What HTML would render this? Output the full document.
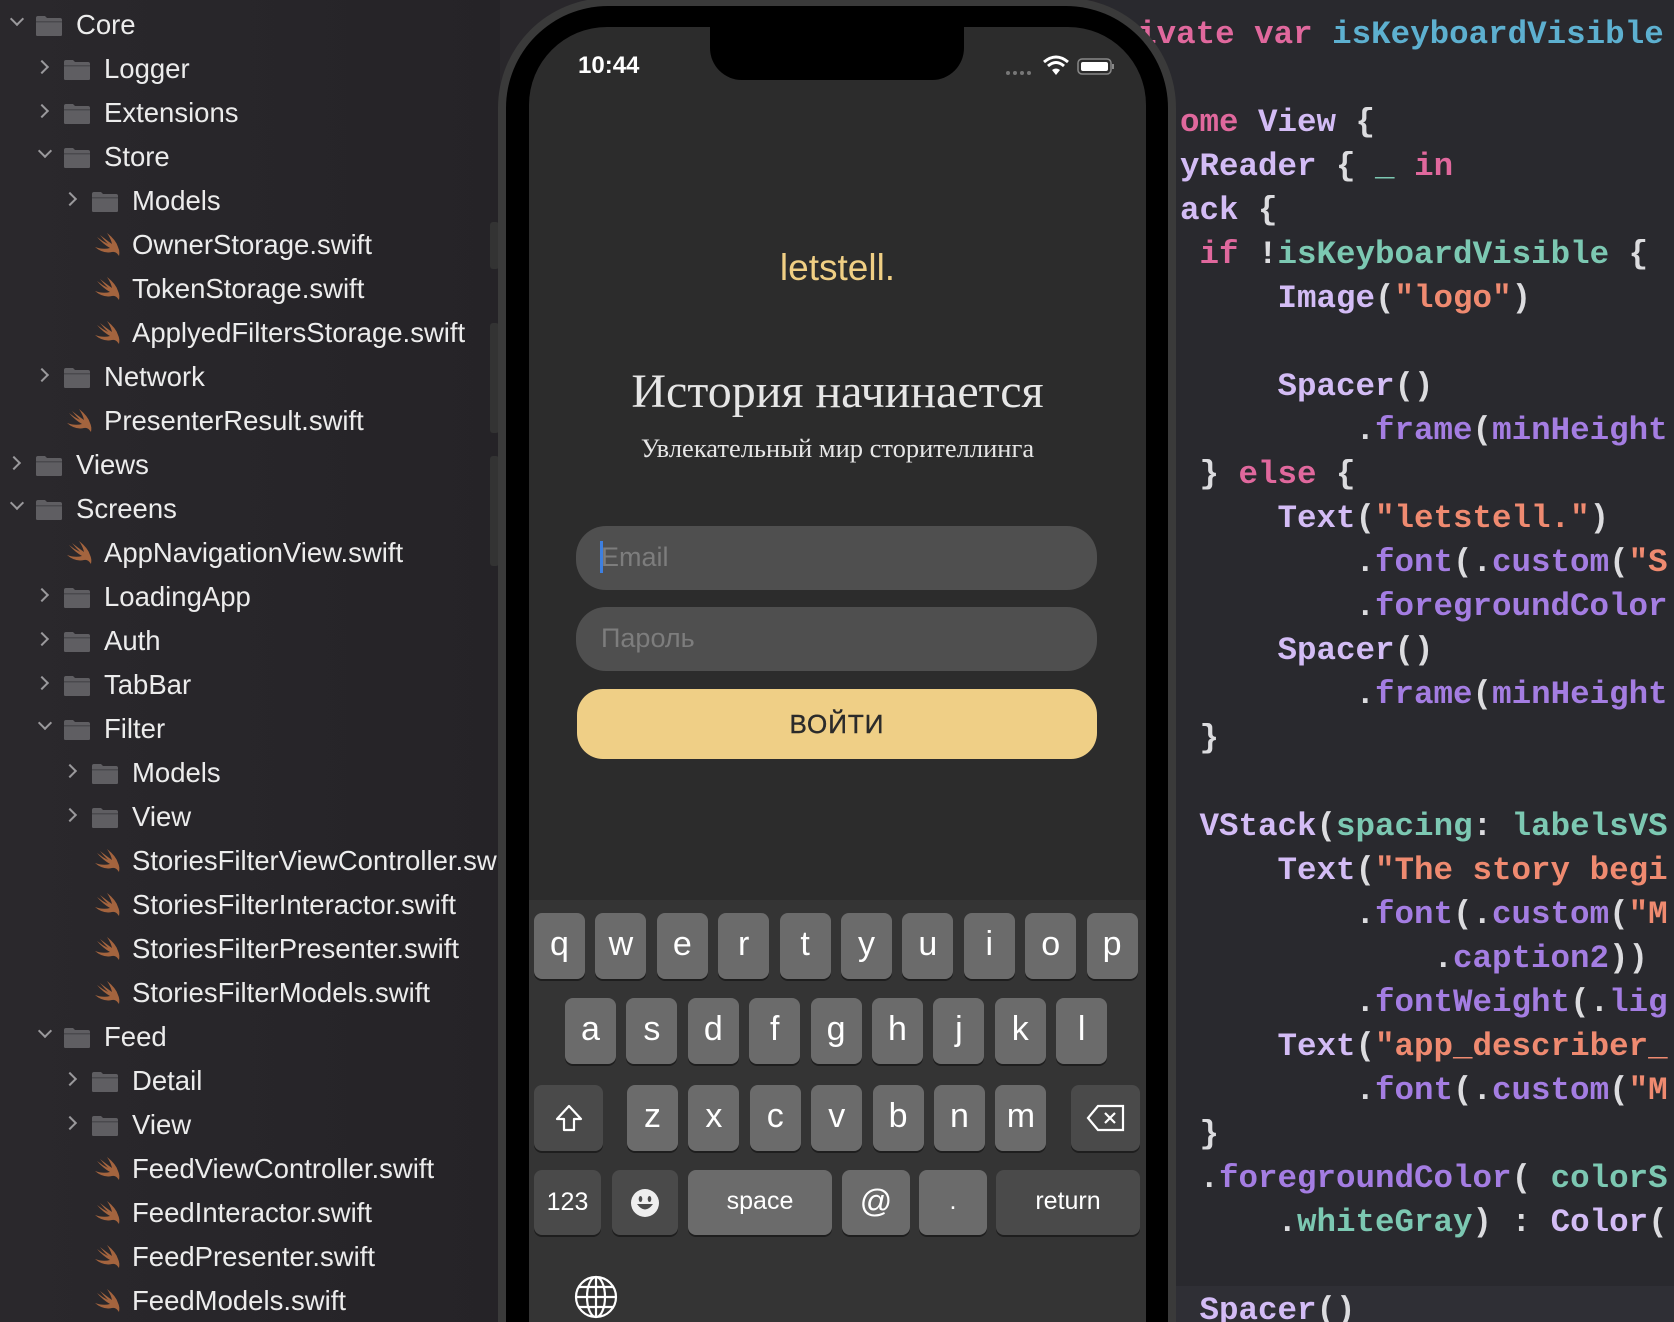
<!DOCTYPE html>
<html><head><meta charset="utf-8">
<style>
*{margin:0;padding:0;box-sizing:border-box}
html,body{width:1674px;height:1322px;overflow:hidden}
body{background:#29272b;font-family:"Liberation Sans",sans-serif}
#wrap{position:relative;width:1674px;height:1322px;overflow:hidden}
.side{position:absolute;left:0;top:0;width:500px;height:1322px;background:linear-gradient(90deg,#2a282c,#252327);overflow:hidden}
.row{position:absolute;height:44px;left:0;right:0;color:#ececec;font-size:27.5px;line-height:44px;white-space:nowrap}
.row span.t{position:absolute}
.chev{position:absolute;top:15px;width:10px;height:10px;border-right:2.5px solid #9a999c;border-bottom:2.5px solid #9a999c}
.chev.c{transform:rotate(-45deg)}
.chev.o{transform:rotate(45deg);top:11px}
.fold{position:absolute;top:12px;width:28px;height:22px}
.code{position:absolute;left:1100px;top:0;right:0;height:1322px;background:#29292e;overflow:hidden}
.cl{position:absolute;font-family:"Liberation Mono",monospace;font-weight:bold;font-size:32.5px;line-height:44px;white-space:pre;color:#dcdcdf}
.k{color:#e0689d}.ty{color:#d3bcf5}.m{color:#a47de2}.s{color:#ef8a70}.g{color:#7cc8b2}.b{color:#5db0d0}
.key{position:absolute;background:#6b6b6b;border-radius:8px;color:#fff;font-size:34px;text-align:center;box-shadow:0 2px 0 #1e1e1e}
.key.d{background:#4a4a4a}
</style></head><body><div id="wrap">
<div class="side" id="side"></div>
<div class="code">
<div style="position:absolute;left:0;right:0;top:1286px;height:36px;background:#2f2f35"></div>
</div>
<div id="codelines"></div>

<div style="position:absolute;left:490px;top:222px;width:9px;height:47px;background:#333;border-radius:3px"></div>
<div style="position:absolute;left:490px;top:323px;width:9px;height:110px;background:#333;border-radius:3px"></div>
<div style="position:absolute;left:490px;top:456px;width:9px;height:110px;background:#333;border-radius:3px"></div>
<div style="position:absolute;left:498px;top:-2px;width:678px;height:1324px;border-radius:110px 110px 0 0;background:#000;border:8px solid #3a3a3a;border-bottom:none"></div>
<div style="position:absolute;left:529px;top:27px;width:617px;height:1295px;border-radius:78px 78px 0 0;background:#2c2c2c;overflow:hidden">
  <div style="position:absolute;left:0;right:0;top:873px;bottom:0;background:#343434"></div>
</div>
<div style="position:absolute;left:710px;top:20px;width:254px;height:60px;background:#000;border-radius:0 0 32px 32px"></div>
<div style="position:absolute;left:578px;top:52px;color:#fff;font-size:24px;font-weight:bold">10:44</div>
<svg style="position:absolute;left:1000px;top:50px" width="120" height="30" viewBox="1000 50 120 30">
<g fill="#777"><circle cx="1008" cy="73" r="2"/><circle cx="1015" cy="73" r="2"/><circle cx="1022" cy="73" r="2"/><circle cx="1029" cy="73" r="2"/></g>
<path d="M1044 62 Q1056 52 1068 62" stroke="#fff" stroke-width="3" fill="none"/>
<path d="M1048 66 Q1056 59 1064 66" stroke="#fff" stroke-width="3" fill="none"/>
<path d="M1052 70 L1056 75 L1060 70 Q1056 67 1052 70Z" fill="#fff"/>
<rect x="1078" y="59" width="33" height="15" rx="4" fill="none" stroke="#888" stroke-width="1.5"/>
<rect x="1081" y="62" width="27" height="9" rx="2" fill="#fff"/>
<rect x="1112" y="64" width="2" height="5" fill="#888"/>
</svg>
<div style="position:absolute;left:530px;width:615px;top:247px;text-align:center;color:#f0cf84;font-size:37px">letstell.</div>
<div style="position:absolute;left:530px;width:615px;top:364px;text-align:center;color:#e6e6e6;font-family:'Liberation Serif',serif;font-size:48px">История начинается</div>
<div style="position:absolute;left:530px;width:615px;top:433px;text-align:center;color:#e6e6e6;font-family:'Liberation Serif',serif;font-size:26.5px">Увлекательный мир сторителлинга</div>
<div style="position:absolute;left:576px;top:526px;width:521px;height:64px;border-radius:30px;background:#4f4f4f"></div>
<div style="position:absolute;left:600px;top:541px;width:3px;height:32px;background:#3d7fe0"></div>
<div style="position:absolute;left:601px;top:542px;color:#7d7d7d;font-size:27px">Email</div>
<div style="position:absolute;left:576px;top:607px;width:521px;height:64px;border-radius:30px;background:#4f4f4f"></div>
<div style="position:absolute;left:601px;top:623px;color:#7d7d7d;font-size:27px">Пароль</div>
<div style="position:absolute;left:577px;top:689px;width:520px;height:70px;border-radius:26px;background:#efcf86;text-align:center;line-height:70px;color:#2b2b2b;font-size:26px;letter-spacing:1px;-webkit-text-stroke:0.4px #2b2b2b">ВОЙТИ</div>
<div id="kb"></div>
<svg style="position:absolute;left:574px;top:1275px" width="44" height="44" viewBox="0 0 44 44" fill="none" stroke="#fff" stroke-width="2.2">
<circle cx="22" cy="22" r="20"/><ellipse cx="22" cy="22" rx="9" ry="20"/><line x1="22" y1="2" x2="22" y2="42"/><line x1="2" y1="22" x2="42" y2="22"/><path d="M5 12 H39 M5 32 H39"/></svg>
</div>
<script>
var rows=[[0,'o','f','Core'],[1,'c','f','Logger'],[1,'c','f','Extensions'],[1,'o','f','Store'],[2,'c','f','Models'],[2,'','s','OwnerStorage.swift'],[2,'','s','TokenStorage.swift'],[2,'','s','ApplyedFiltersStorage.swift'],[1,'c','f','Network'],[1,'','s','PresenterResult.swift'],[0,'c','f','Views'],[0,'o','f','Screens'],[1,'','s','AppNavigationView.swift'],[1,'c','f','LoadingApp'],[1,'c','f','Auth'],[1,'c','f','TabBar'],[1,'o','f','Filter'],[2,'c','f','Models'],[2,'c','f','View'],[2,'','s','StoriesFilterViewController.swift'],[2,'','s','StoriesFilterInteractor.swift'],[2,'','s','StoriesFilterPresenter.swift'],[2,'','s','StoriesFilterModels.swift'],[1,'o','f','Feed'],[2,'c','f','Detail'],[2,'c','f','View'],[2,'','s','FeedViewController.swift'],[2,'','s','FeedInteractor.swift'],[2,'','s','FeedPresenter.swift'],[2,'','s','FeedModels.swift']];
var h='';
rows.forEach(function(r,i){var l=r[0],y=3+44*i,off=28*l;
h+='<div class="row" style="top:'+y+'px">';
if(r[1])h+='<div class="chev '+r[1]+'" style="left:'+(r[1]=='c'?(9+off):(12+off))+'px"></div>';
if(r[2]=='f')h+='<svg class="fold" style="left:'+(35+off)+'px" viewBox="0 0 28 22"><path d="M1 3 Q1 1 3 1 H10 L12 3 H25 Q27 3 27 5 V20 Q27 21 25 21 H3 Q1 21 1 20Z" fill="#5f5e62"/><rect x="1" y="6" width="26" height="1.5" fill="#4a494d"/></svg>';
else h+='<svg class="fold" style="left:'+(76+off-39)+'px;width:28px;height:26px;top:9px" viewBox="0 0 28 26"><path d="M2 15 Q10 22 19 20 Q23 19 26 24 Q27 19 25 15 Q23 8 14 1 Q18 7 19 12 Q12 7 7 3 Q11 8 15 12 Q9 9 4 5 Q10 12 17 16 Q10 18 2 15Z" fill="#a4643e"/></svg>';
h+='<span class="t" style="left:'+(76+off)+'px">'+r[3]+'</span></div>';});
document.getElementById('side').innerHTML=h;
var cw=19.5,c0=1180;
var L=[[0,-2.2,'<span class="k">ivate var</span> <span class="b">isKeyboardVisible</span>'],
[2,0,'<span class="k">ome</span> <span class="ty">View</span> {'],
[3,0,'<span class="ty">yReader</span> { <span class="g">_</span> <span class="k">in</span>'],
[4,0,'<span class="ty">ack</span> {'],
[5,1,'<span class="k">if</span> !<span class="g">isKeyboardVisible</span> {'],
[6,5,'<span class="ty">Image</span>(<span class="s">"logo"</span>)'],
[8,5,'<span class="ty">Spacer</span>()'],
[9,9,'.<span class="m">frame</span>(<span class="m">minHeight</span>'],
[10,1,'} <span class="k">else</span> {'],
[11,5,'<span class="ty">Text</span>(<span class="s">"letstell."</span>)'],
[12,9,'.<span class="m">font</span>(.<span class="m">custom</span>(<span class="s">"S</span>'],
[13,9,'.<span class="m">foregroundColor</span>'],
[14,5,'<span class="ty">Spacer</span>()'],
[15,9,'.<span class="m">frame</span>(<span class="m">minHeight</span>'],
[16,1,'}'],
[18,1,'<span class="ty">VStack</span>(<span class="g">spacing</span>: <span class="g">labelsVS</span>'],
[19,5,'<span class="ty">Text</span>(<span class="s">"The story begi</span>'],
[20,9,'.<span class="m">font</span>(.<span class="m">custom</span>(<span class="s">"M</span>'],
[21,13,'.<span class="m">caption2</span>))'],
[22,9,'.<span class="m">fontWeight</span>(.<span class="m">lig</span>'],
[23,5,'<span class="ty">Text</span>(<span class="s">"app_describer_</span>'],
[24,9,'.<span class="m">font</span>(.<span class="m">custom</span>(<span class="s">"M</span>'],
[25,1,'}'],
[26,1,'.<span class="m">foregroundColor</span>( <span class="g">colorS</span>'],
[27,5,'.<span class="g">whiteGray</span>) : <span class="ty">Color</span>('],
[29,1,'<span class="ty">Spacer</span>()']];
var c='';L.forEach(function(a){c+='<div class="cl" style="top:'+(13+44*a[0])+'px;left:'+(c0+cw*a[1])+'px">'+a[2]+'</div>';});
document.getElementById('codelines').innerHTML=c;
var k='',p=61.4;
'qwertyuiop'.split('').forEach(function(ch,i){k+='<div class="key" style="left:'+(534+p*i)+'px;top:913px;width:51px;height:66px;line-height:62px">'+ch+'</div>';});
'asdfghjkl'.split('').forEach(function(ch,i){k+='<div class="key" style="left:'+(565+p*i)+'px;top:998px;width:51px;height:66px;line-height:62px">'+ch+'</div>';});
'zxcvbnm'.split('').forEach(function(ch,i){k+='<div class="key" style="left:'+(627+p*i)+'px;top:1085px;width:51px;height:66px;line-height:62px">'+ch+'</div>';});
k+='<div class="key d" style="left:534px;top:1085px;width:69px;height:66px"><svg width="30" height="30" viewBox="0 0 30 30" style="margin-top:18px" fill="none" stroke="#fff" stroke-width="2.2" stroke-linejoin="round"><path d="M15 3 L27 16 H20 V27 H10 V16 H3Z"/></svg></div>';
k+='<div class="key d" style="left:1071px;top:1085px;width:69px;height:66px"><svg width="40" height="28" viewBox="0 0 40 28" style="margin-top:19px" fill="none" stroke="#fff" stroke-width="2.2"><path d="M12 2 H37 V26 H12 L2 14Z"/><path d="M19 9 L29 19 M29 9 L19 19"/></svg></div>';
k+='<div class="key d" style="left:534px;top:1170px;width:67px;height:65px;line-height:65px;font-size:25px">123</div>';
k+='<div class="key d" style="left:612px;top:1170px;width:66px;height:65px"><svg width="30" height="30" viewBox="0 0 30 30" style="margin-top:18px"><circle cx="15" cy="15" r="14" fill="#eee"/><ellipse cx="10.5" cy="11" rx="1.8" ry="3" fill="#4a4a4a"/><ellipse cx="19.5" cy="11" rx="1.8" ry="3" fill="#4a4a4a"/><path d="M7 16 Q15 27 23 16Z" fill="#4a4a4a"/></svg></div>';
k+='<div class="key" style="left:688px;top:1170px;width:144px;height:65px;line-height:62px;font-size:25px">space</div>';
k+='<div class="key" style="left:842px;top:1170px;width:68px;height:65px;line-height:62px;font-size:32px">@</div>';
k+='<div class="key" style="left:919px;top:1170px;width:68px;height:65px;line-height:62px;font-size:25px">.</div>';
k+='<div class="key d" style="left:996px;top:1170px;width:144px;height:65px;line-height:62px;font-size:25px">return</div>';
document.getElementById('kb').innerHTML=k;
</script>
</body></html>
